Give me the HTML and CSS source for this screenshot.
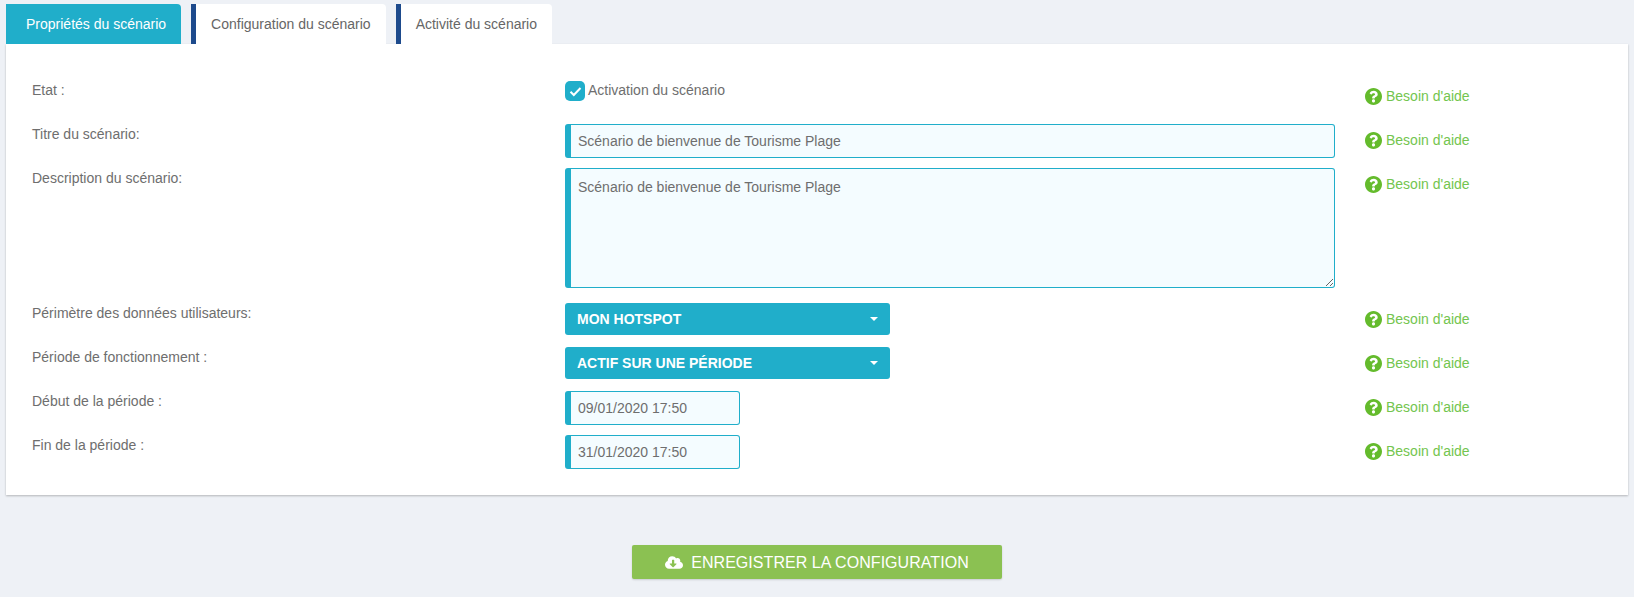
FILE: index.html
```html
<!DOCTYPE html>
<html lang="fr">
<head>
  <meta charset="UTF-8">
  <title>Propriétés du scénario</title>
  <link rel="stylesheet" href="styles.css">
</head>
<body>
  <svg class="icon-defs" width="0" height="0" aria-hidden="true">
    <symbol id="icon-help" viewBox="8 8 496 496">
      <path d="M504 256c0 136.997-111.043 248-248 248S8 392.997 8 256C8 119.083 119.043 8 256 8s248 111.083 248 248zM262.655 90c-54.497 0-89.255 22.957-116.549 63.758-3.536 5.286-2.353 12.415 2.715 16.258l34.699 26.31c5.205 3.947 12.621 3.008 16.665-2.122 17.864-22.658 30.113-35.797 57.303-35.797 20.429 0 45.698 13.148 45.698 32.958 0 14.976-12.363 22.667-32.534 33.976C247.128 238.528 216 254.941 216 296v4c0 6.627 5.373 12 12 12h56c6.627 0 12-5.373 12-12v-1.333c0-28.462 83.186-29.647 83.186-106.667 0-58.002-60.165-102-116.531-102zM256 338c-25.365 0-46 20.635-46 46 0 25.364 20.635 46 46 46s46-20.636 46-46c0-25.365-20.635-46-46-46z"/>
    </symbol>
  </svg>

  <div class="tabs">
    <a class="tab active">Propriétés du scénario</a>
    <a class="tab">Configuration du scénario</a>
    <a class="tab">Activité du scénario</a>
  </div>

  <div class="panel">
    <div class="row">
      <label class="row-label">Etat :</label>
      <div class="row-field">
        <label class="check">
          <span class="check-box">
            <svg viewBox="0 0 13 11" width="13" height="11"><path d="M1.5 5.8 4.8 9 11.5 2" fill="none" stroke="#fff" stroke-width="2"/></svg>
          </span>
          <span class="check-text">Activation du scénario</span>
        </label>
      </div>
      <a class="help"><svg class="help-icon"><use href="#icon-help"/></svg>Besoin d'aide</a>
    </div>

    <div class="row">
      <label class="row-label">Titre du scénario:</label>
      <div class="row-field">
        <input class="field" type="text" value="Scénario de bienvenue de Tourisme Plage">
      </div>
      <a class="help"><svg class="help-icon"><use href="#icon-help"/></svg>Besoin d'aide</a>
    </div>

    <div class="row row-area">
      <label class="row-label">Description du scénario:</label>
      <div class="row-field">
        <textarea class="field field-area">Scénario de bienvenue de Tourisme Plage</textarea>
      </div>
      <a class="help"><svg class="help-icon"><use href="#icon-help"/></svg>Besoin d'aide</a>
    </div>

    <div class="row row-select">
      <label class="row-label">Périmètre des données utilisateurs:</label>
      <div class="row-field">
        <button class="dropdown">MON HOTSPOT<span class="caret"></span></button>
      </div>
      <a class="help"><svg class="help-icon"><use href="#icon-help"/></svg>Besoin d'aide</a>
    </div>

    <div class="row row-select">
      <label class="row-label">Période de fonctionnement :</label>
      <div class="row-field">
        <button class="dropdown">ACTIF SUR UNE PÉRIODE<span class="caret"></span></button>
      </div>
      <a class="help"><svg class="help-icon"><use href="#icon-help"/></svg>Besoin d'aide</a>
    </div>

    <div class="row">
      <label class="row-label">Début de la période :</label>
      <div class="row-field">
        <input class="field field-date" type="text" value="09/01/2020 17:50">
      </div>
      <a class="help"><svg class="help-icon"><use href="#icon-help"/></svg>Besoin d'aide</a>
    </div>

    <div class="row">
      <label class="row-label">Fin de la période :</label>
      <div class="row-field">
        <input class="field field-date" type="text" value="31/01/2020 17:50">
      </div>
      <a class="help"><svg class="help-icon"><use href="#icon-help"/></svg>Besoin d'aide</a>
    </div>
  </div>

  <div class="actions">
    <button class="save">
      <svg class="save-icon" viewBox="0 0 640 512"><path d="M537.6 226.6c4.1-10.7 6.4-22.4 6.4-34.6 0-53-43-96-96-96-19.7 0-38.1 6-53.3 16.2C367 64.2 315.3 32 256 32c-88.4 0-160 71.6-160 160 0 2.7.1 5.4.2 8.1C40.2 219.8 0 273.2 0 336c0 79.5 64.5 144 144 144h368c70.7 0 128-57.3 128-128 0-61.9-44-113.6-102.4-125.4zm-132.9 88.7L299.3 420.7c-6.2 6.2-16.4 6.2-22.6 0L171.3 315.3c-10.1-10.1-2.9-27.3 11.3-27.3H248V176c0-8.8 7.2-16 16-16h48c8.8 0 16 7.2 16 16v112h65.4c14.2 0 21.4 17.2 11.3 27.3z"/></svg>
      <span class="save-text">ENREGISTRER LA CONFIGURATION</span>
    </button>
  </div>
</body>
</html>
```

FILE: styles.css
```css
* {
  box-sizing: border-box;
}

body {
  font-family: "Liberation Sans", Arial, sans-serif;
  font-size: 14px;
  color: #6e6e6e;
  background: #eef1f6;
  margin: 0;
  padding: 4px 6px 0;
  height: 597px;
  overflow: hidden;
}

.icon-defs {
  display: block;
}

.tabs {
  display: flex;
  gap: 10px;
  height: 40px;
}

.tab {
  display: block;
  background: #fff;
  border-left: 5px solid #1d4a8c;
  border-radius: 0 4px 0 0;
  padding: 0 15px;
  line-height: 40px;
  color: #666;
}

.tab.active {
  background: #20aeca;
  border-left-color: #20aeca;
  color: #fff;
}

.panel {
  background: #fff;
  height: 451px;
  padding: 36px 0 0 26px;
  box-shadow: 0 1px 2px rgba(0, 0, 0, 0.25);
}

.row {
  display: flex;
  align-items: flex-start;
  height: 44px;
}

.row-area {
  height: 135px;
}

.row-label {
  width: 533px;
  line-height: 20px;
}

.row-field {
  width: 800px;
}

.help {
  display: flex;
  align-items: center;
  gap: 4px;
  height: 17px;
  margin-top: 8px;
  line-height: 15px;
  color: #73c54e;
}

.help-icon {
  width: 17px;
  height: 17px;
  fill: #64bb2c;
}

.check {
  display: flex;
  align-items: flex-start;
  gap: 3px;
  height: 20px;
  margin-top: 1px;
}

.check-box {
  display: flex;
  align-items: center;
  justify-content: center;
  width: 20px;
  height: 20px;
  background: #20aeca;
  border-radius: 5px;
}

.check-text {
  line-height: 18px;
}

.field {
  display: block;
  width: 770px;
  height: 34px;
  padding: 0 7px;
  font-family: inherit;
  font-size: 14px;
  color: #6e6e6e;
  background: #f4fcff;
  border: 1px solid #20aeca;
  border-left: 6px solid #20aeca;
  border-radius: 3px;
  outline: none;
}

.field-area {
  height: 120px;
  padding: 10px 7px;
}

.field-date {
  width: 175px;
}

.dropdown {
  display: flex;
  align-items: center;
  justify-content: space-between;
  width: 325px;
  height: 32px;
  padding: 0 12px;
  font-family: inherit;
  font-size: 14px;
  font-weight: bold;
  color: #fff;
  background: #20aeca;
  border: none;
  border-radius: 3px;
}

.caret {
  border-top: 4px solid #fff;
  border-left: 4px solid transparent;
  border-right: 4px solid transparent;
}

.actions {
  display: flex;
  justify-content: center;
  padding-top: 50px;
}

.save {
  display: flex;
  align-items: center;
  justify-content: center;
  gap: 8px;
  width: 370px;
  height: 34px;
  font-family: inherit;
  font-size: 16px;
  color: #fff;
  background: #8bc152;
  border: none;
  border-radius: 2px;
  box-shadow: 0 1px 2px rgba(0, 0, 0, 0.15);
}

.save-text {
  letter-spacing: 0.05px;
  line-height: 20px;
  padding-top: 1px;
}

.save-icon {
  width: 18px;
  height: 15px;
  fill: #fff;
}
```
